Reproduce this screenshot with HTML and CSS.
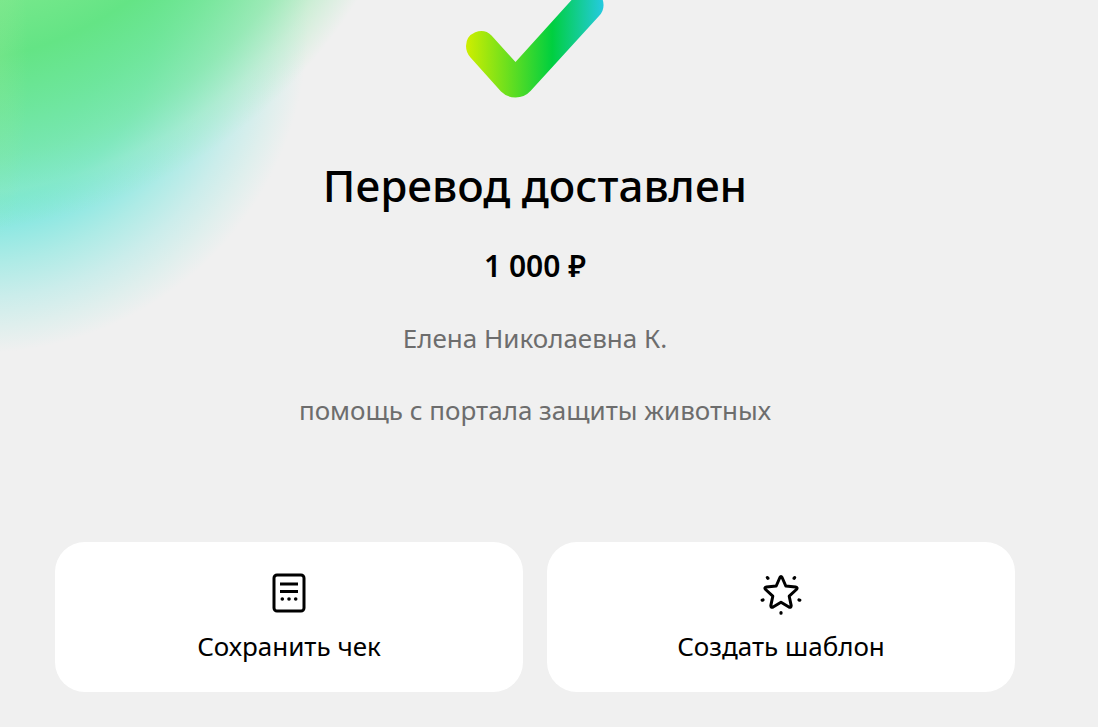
FILE: index.html
```html
<!DOCTYPE html>
<html lang="ru">
<head>
  <meta charset="UTF-8" />
  <meta name="viewport" content="width=device-width, initial-scale=1.0"/>
  <title>Перевод доставлен</title>
  <link rel="stylesheet" href="styles.css">
</head>
<body>

  <main>
    <svg class="check" viewBox="0 0 138 98" aria-hidden="true">
      <defs>
        <linearGradient id="check-fill" gradientUnits="userSpaceOnUse" x1="1" y1="0" x2="136" y2="0">
          <stop offset="0" stop-color="#cdee00"/>
          <stop offset="0.63" stop-color="#00cf3f"/>
          <stop offset="1" stop-color="#24cadc"/>
        </linearGradient>
      </defs>
      <path d="M0 46A15 15 0 0 1 25.500 35.500L49.500 62L111 -6A15.200 15.200 0 0 1 133 16L64.500 91Q58.500 97.500 49.500 97.500Q41 97.500 35 91.500L4.500 57.500Q0 52.500 0 46Z" fill="url(#check-fill)"/>
    </svg>

    <h1>Перевод доставлен</h1>
    <p class="amount">1 000 ₽</p>
    <p class="info">Елена Николаевна К.</p>
    <p class="info">помощь с портала защиты животных</p>

    <div class="actions">
      <button type="button">
        <svg viewBox="0 0 48 48" aria-hidden="true" fill="none" stroke="#000" stroke-width="3">
          <rect x="9" y="6" width="30" height="36" rx="3"/>
          <path d="M15 15h18M15 22.500h18"/>
          <g fill="#000" stroke="none">
            <circle cx="17.300" cy="30" r="1.800"/>
            <circle cx="24" cy="30" r="1.800"/>
            <circle cx="30.700" cy="30" r="1.800"/>
          </g>
        </svg>
        <span>Сохранить чек</span>
      </button>
      <button type="button">
        <svg viewBox="0 0 48 48" aria-hidden="true" fill="none" stroke="#000" stroke-width="3" stroke-linecap="round" stroke-linejoin="round">
          <path d="M22.900 8.500Q24 6.500 25.100 8.500L28.800 17L38.600 18Q41.200 18.600 39.400 20.500L32.200 27.200L34.200 36.600Q34.200 39 31.900 38L24 33.300L16.100 38Q13.800 39 13.800 36.600L15.800 27.200L8.600 20.500Q6.800 18.600 9.400 18L19.200 17Z"/>
          <path stroke-width="3.200" d="M10.400 8.600l.500 .700M37.600 8.600l-.500 .700M5.200 31.200l.800-.300M42.800 31.200l-.800-.300M24 43.500v.700"/>
        </svg>
        <span>Создать шаблон</span>
      </button>
    </div>
  </main>

</body>
</html>
```
FILE: styles.css
```css
*{margin:0;padding:0;box-sizing:border-box}
body{
  min-height:100vh;
  font-family:"Noto Sans","Open Sans",sans-serif;
  color:#000;
  background-color:#f0f0f0;
  background-image:
    radial-gradient(ellipse 28px 180px at 0 60px,rgba(160,232,150,0.22),rgba(160,232,150,0)),
    radial-gradient(circle at -60px -260px,#76e88b 265px,#64e485 322px,rgba(112,230,142,0.82) 375px,rgba(130,232,158,0.68) 420px,rgba(160,236,180,0.42) 456px,rgba(215,240,215,0) 492px),
    radial-gradient(circle at -20px 25px,#60e4d8 130px,#70e6da 175px,#90e8e2 205px,#aeebe6 238px,#cbedeb 273px,#dfefed 302px,#f0f0f0 328px);
  background-repeat:no-repeat;
  background-size:440px 360px;
}
main{display:flex;flex-direction:column;align-items:center;padding:0 83px 35px 55px;text-align:center}
.check{display:block;width:138px;height:98px}
h1{margin-top:55px;font-size:44px;line-height:64px;font-weight:500}
.amount{margin-top:29px;font-size:30px;line-height:40px;font-weight:600}
.info{margin-top:32px;font-size:26px;line-height:40px;color:#6d6d6d}
.actions{display:grid;grid-template-columns:1fr 1fr;gap:24px;width:100%;margin-top:112px}
button{display:flex;flex-direction:column;align-items:center;gap:9px;padding:27px 16px 26px;border:none;border-radius:30px;background:#fff;color:#000;font-family:inherit;font-size:26px;line-height:40px;cursor:pointer}
button svg{width:48px;height:48px}
@media(max-width:600px){
  main{padding:0 16px 24px}
  .actions{grid-template-columns:1fr}
}
```
